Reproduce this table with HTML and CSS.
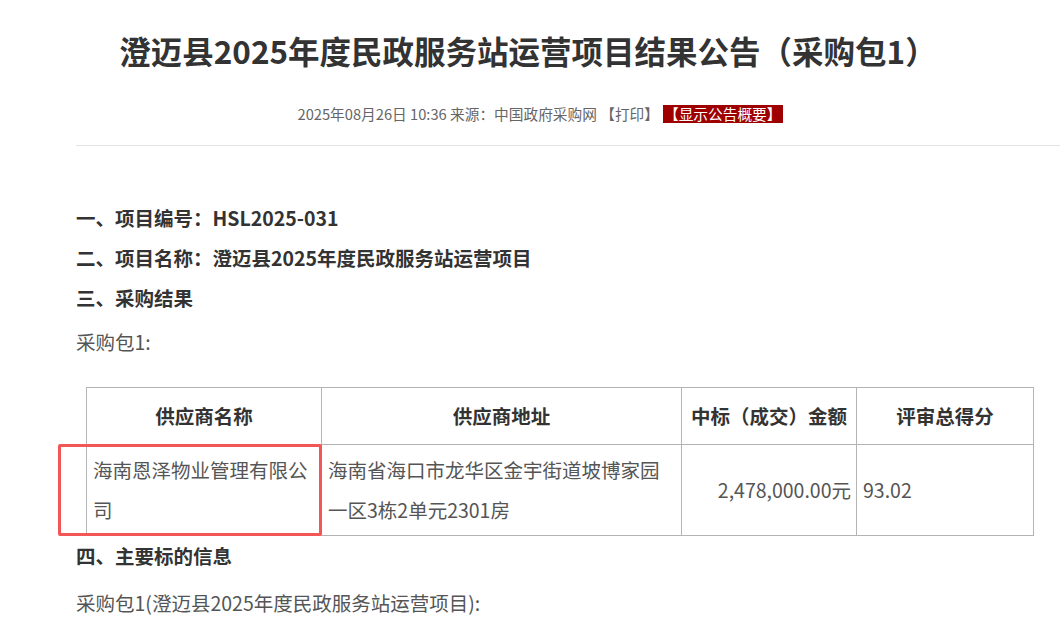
FILE: index.html
```html
<!DOCTYPE html>
<html lang="zh-CN">
<head>
    <meta charset="UTF-8">
    <meta name="viewport" content="width=device-width, initial-scale=1.0">
    <title>澄迈县2025年度民政服务站运营项目结果公告（采购包1）</title>
    <link rel="stylesheet" href="styles.css">
</head>
<body>
    <!-- Notice header -->
    <div class="notice-head">
        <h1 class="notice-title">澄迈县2025年度民政服务站运营项目结果公告（采购包1）</h1>
        <div class="notice-meta">
            2025年08月26日 10:36 来源：中国政府采购网 <span class="meta-link">【打印】</span><span class="summary-btn">【显示公告概要】</span>
        </div>
    </div>
    <div class="divider"></div>

    <!-- Notice body -->
    <div class="notice-body">
        <p class="section-title">一、项目编号：HSL2025-031</p>
        <p class="section-title">二、项目名称：澄迈县2025年度民政服务站运营项目</p>
        <p class="section-title">三、采购结果</p>
        <p class="plain pkg-label">采购包1:</p>

        <div class="result-wrap">
            <table class="result-table">
                <colgroup>
                    <col class="col-name">
                    <col class="col-addr">
                    <col class="col-money">
                    <col class="col-score">
                </colgroup>
                <tr>
                    <th>供应商名称</th>
                    <th>供应商地址</th>
                    <th>中标（成交）金额</th>
                    <th>评审总得分</th>
                </tr>
                <tr>
                    <td>海南恩泽物业管理有限公司</td>
                    <td>海南省海口市龙华区金宇街道坡博家园一区3栋2单元2301房</td>
                    <td class="money">2,478,000.00元</td>
                    <td>93.02</td>
                </tr>
            </table>
            <!-- highlight mark over the winning supplier -->
            <div class="highlight-box"></div>
        </div>

        <p class="section-title">四、主要标的信息</p>
        <p class="plain last-line">采购包1(澄迈县2025年度民政服务站运营项目):</p>
    </div>
</body>
</html>
```

FILE: styles.css
```css
/* Page base */
body {
    margin: 0;
    background: #ffffff;
    font-family: "Noto Sans CJK SC", "Noto Sans", sans-serif;
    color: #333333;
    overflow: hidden;
}

/* Header: title + meta line */
.notice-head {
    width: 920px;
    margin-left: 76px;
    padding-top: 26px;
    text-align: center;
}

.notice-title {
    margin: 0;
    padding-right: 16px;
    font-size: 31.5px;
    line-height: 48px;
    font-weight: bold;
    color: #333333;
}

.notice-meta {
    margin-top: 28px;
    padding-left: 8px;
    font-size: 14.7px;
    line-height: 24px;
    color: #666666;
}

.summary-btn {
    display: inline-block;
    background-color: #9e0000;
    color: #ffffff;
    line-height: 18px;
    padding: 0 1px;
    margin-left: 4px;
}

.divider {
    margin: 19px 0 0 76px;
    border-top: 1px solid #e3e3e3;
}

/* Body */
.notice-body {
    padding-left: 76px;
    padding-top: 52px;
}

.notice-body p {
    margin: 0;
    font-size: 19.5px;
    line-height: 40px;
}

.section-title {
    font-weight: bold;
    color: #333333;
}

.plain {
    color: #555555;
}

.pkg-label {
    margin-top: 4px !important;
}

.last-line {
    margin-top: 7px !important;
}

/* Result table */
.result-wrap {
    position: relative;
    margin-top: 25px;
}

.result-table {
    margin-left: 10px;
    width: 947px;
    border-collapse: collapse;
    table-layout: fixed;
    font-size: 19.5px;
    line-height: 40px;
    color: #555555;
}

.col-name { width: 235px; }
.col-addr { width: 360px; }
.col-money { width: 175px; }
.col-score { width: 177px; }

.result-table th,
.result-table td {
    border: 1px solid #b4b4b4;
    vertical-align: middle;
}

.result-table th {
    height: 56px;
    padding: 0 4px;
    font-weight: bold;
    color: #333333;
    text-align: center;
}

.result-table td {
    height: 80px;
    padding: 5px 4px 5px 6px;
    text-align: left;
}

.result-table td.money {
    text-align: right;
    padding-right: 5px;
}

.highlight-box {
    position: absolute;
    left: -18px;
    top: 57px;
    width: 258px;
    height: 86px;
    border: 3px solid #f25656;
    border-radius: 2px;
}
```
